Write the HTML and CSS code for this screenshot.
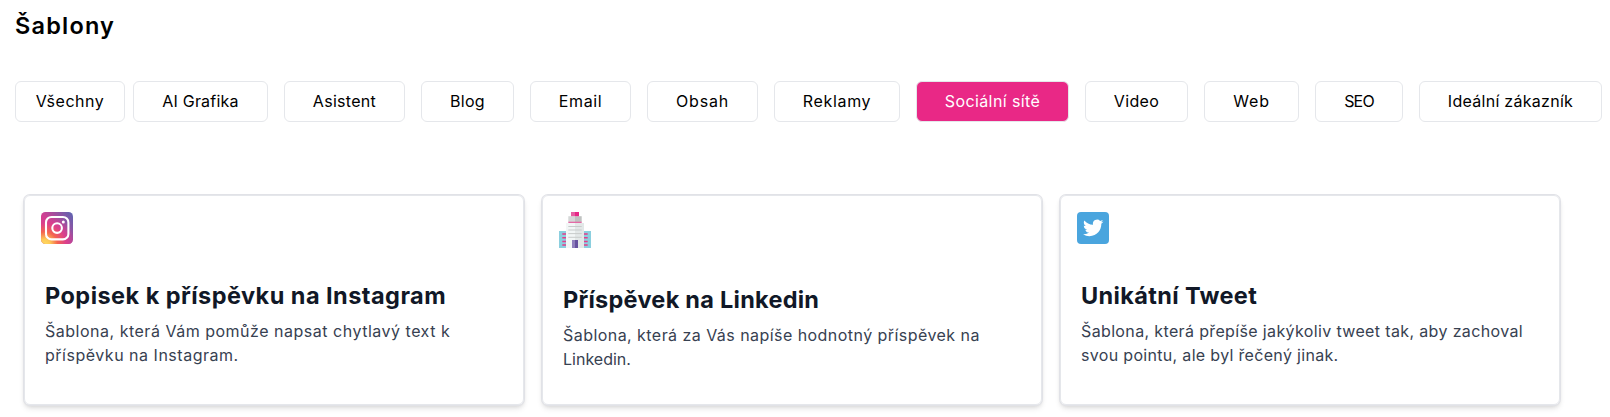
FILE: index.html
```html
<!DOCTYPE html>
<html lang="cs">
<head>
<meta charset="utf-8">
<title>Šablony</title>
<link rel="stylesheet" href="styles.css">
</head>
<body>
<main class="page">
  <h1 class="page-title">Šablony</h1>
  <nav class="tabs">
    <button class="tab tab-all">Všechny</button>
    <button class="tab tab-graphics">AI Grafika</button>
    <button class="tab tab-assistant">Asistent</button>
    <button class="tab tab-blog">Blog</button>
    <button class="tab tab-email">Email</button>
    <button class="tab tab-content">Obsah</button>
    <button class="tab tab-ads">Reklamy</button>
    <button class="tab tab-social active">Sociální sítě</button>
    <button class="tab tab-video">Video</button>
    <button class="tab tab-web">Web</button>
    <button class="tab tab-seo">SEO</button>
    <button class="tab tab-customer">Ideální zákazník</button>
  </nav>
  <section class="cards">
    <article class="card">
      <svg class="icon" width="32" height="32" viewBox="0 0 32 32">
        <defs>
          <radialGradient id="warm" cx="0.12" cy="1.02" r="0.95">
            <stop offset="0" stop-color="#ffdc60"/>
            <stop offset="0.18" stop-color="#fdc957"/>
            <stop offset="0.42" stop-color="#f4644f"/>
            <stop offset="0.7" stop-color="#dc3f8b"/>
            <stop offset="1" stop-color="#d03e94" stop-opacity="0"/>
          </radialGradient>
          <linearGradient id="cool" x1="0.3" y1="0.45" x2="0.95" y2="0">
            <stop offset="0" stop-color="#d23f92"/>
            <stop offset="1" stop-color="#5f63b0"/>
          </linearGradient>
        </defs>
        <rect width="32" height="32" rx="4.5" fill="url(#cool)"/>
        <rect width="32" height="32" rx="4.5" fill="url(#warm)"/>
        <rect x="5" y="5" width="22.4" height="22.4" rx="5.5" fill="none" stroke="#fff" stroke-width="2.1"/>
        <circle cx="16.1" cy="16.1" r="4.8" fill="none" stroke="#fff" stroke-width="2.1"/>
        <circle cx="22.3" cy="9.9" r="1.5" fill="#fff"/>
      </svg>
      <h2 class="card-title title-instagram">Popisek k příspěvku na Instagram</h2>
      <p class="card-text"><span class="line ig-1">Šablona, která Vám pomůže napsat chytlavý text k</span> <span class="line ig-2">příspěvku na Instagram.</span></p>
    </article>
    <article class="card">
      <svg class="icon" width="32" height="36" viewBox="0 0 32 36">
        <path fill="#8bcfdf" d="M0 19h7v17H0zM25 19h7v17h-7z"/>
        <path stroke="#e53c8b" stroke-width="1.5" d="M3.300 22H7M3.300 25.700H7M3.300 29.400H7M3.300 33.100H7M25 22h3.700M25 25.700h3.700M25 29.400h3.700M25 33.100h3.700"/>
        <path fill="#f2f6f6" d="M7 11h9v25H7z"/>
        <path fill="#e3e8e8" d="M16 11h9v25h-9z"/>
        <path fill="#d5d7d7" d="M9.300 4.200H16V10H9.300z"/>
        <path fill="#bfc2c1" d="M16 4.200h6.700V10H16z"/>
        <path fill="#e46aa5" d="M9.300 9.700h13.400V11H9.300z"/>
        <path fill="#e75fa2" d="M12 0h4v4.200h-4z"/>
        <path fill="#e72887" d="M16 0h4v4.200h-4z"/>
        <path stroke="#c8cccb" stroke-width="1" d="M9.300 14.500h13.400M9.300 18h13.400M9.300 21.600h13.400M9.300 25.300h13.400"/>
        <path fill="#8f7fbc" d="M13 28h3v8h-3z"/>
        <path fill="#66529f" d="M16 28h3v8h-3z"/>
      </svg>
      <h2 class="card-title title-linkedin">Příspěvek na Linkedin</h2>
      <p class="card-text"><span class="line li-1">Šablona, která za Vás napíše hodnotný příspěvek na</span> <span class="line li-2">Linkedin.</span></p>
    </article>
    <article class="card">
      <svg class="icon" width="32" height="32" viewBox="0 0 32 32">
        <rect width="32" height="32" rx="4" fill="#4aa5de"/>
        <path fill="#fff" transform="translate(6 5.700) scale(.85)" d="M23.953 4.570a10 10 0 0 1-2.825.775 4.958 4.958 0 0 0 2.163-2.723c-.951.555-2.005.959-3.127 1.184a4.920 4.920 0 0 0-8.384 4.482C7.690 8.095 4.067 6.130 1.640 3.162a4.822 4.822 0 0 0-.666 2.475c0 1.710.870 3.213 2.188 4.096a4.904 4.904 0 0 1-2.228-.616v.060a4.923 4.923 0 0 0 3.946 4.827 4.996 4.996 0 0 1-2.212.085 4.936 4.936 0 0 0 4.604 3.417 9.867 9.867 0 0 1-6.102 2.105c-.390 0-.779-.023-1.170-.067a13.995 13.995 0 0 0 7.557 2.209c9.053 0 13.998-7.496 13.998-13.985 0-.210 0-.420-.015-.630A9.935 9.935 0 0 0 24 4.590z"/>
      </svg>
      <h2 class="card-title title-tweet">Unikátní Tweet</h2>
      <p class="card-text"><span class="line tw-1">Šablona, která přepíše jakýkoliv tweet tak, aby zachoval</span> <span class="line tw-2">svou pointu, ale byl řečený jinak.</span></p>
    </article>
  </section>
</main>
</body>
</html>
```
FILE: styles.css
```css
* { box-sizing: border-box; }
body {
  margin: 0;
  background: #fff;
  color: #000;
  font-family: "Inter", sans-serif;
  font-size: 16px;
  line-height: 24px;
}
.page { min-height: 417px; padding: 10px 0 0 15px; }
.page-title {
  margin: 0 0 39px;
  font-size: 23.5px;
  line-height: 32px;
  font-weight: 600;
  letter-spacing: 1.2px;
}
.tabs { display: flex; gap: 16px; }
.tab {
  flex: none;
  height: 41px;
  padding: 0 0 2px;
  border: 1px solid #e5e7eb;
  border-radius: 6px;
  background: #fff;
  color: #000;
  font: inherit;
  white-space: nowrap;
}
.tab.active { background: #e92886; color: #fff; }
.tab-all { width: 110px; margin-right: -8px; letter-spacing: .51px; }
.tab-graphics { width: 135px; letter-spacing: .2px; }
.tab-assistant { width: 121px; letter-spacing: .3px; }
.tab-blog { width: 93px; letter-spacing: .3px; }
.tab-email { width: 101px; letter-spacing: .6px; }
.tab-content { width: 111px; letter-spacing: .85px; }
.tab-ads { width: 126px; letter-spacing: .68px; }
.tab-social { width: 153px; letter-spacing: .39px; }
.tab-video { width: 103px; letter-spacing: .35px; }
.tab-web { width: 95px; letter-spacing: .8px; }
.tab-seo { width: 88px; letter-spacing: -.8px; }
.tab-customer { width: 183px; letter-spacing: .28px; }

.cards {
  display: grid;
  grid-template-columns: repeat(3, 500px);
  gap: 18px;
  margin: 73px 0 0 9px;
}
.card {
  height: 210px;
  padding: 16px;
  border: 1px solid #e5e7eb;
  border-radius: 6px;
  box-shadow: 0 0 0 1px #e1e2e7, 0 4px 6px -1px rgba(0, 0, 0, .12), 0 2px 4px -1px rgba(0, 0, 0, .1);
}
.icon { display: block; }
.card-title {
  margin: 36px 0 0 4px;
  font-size: 23.5px;
  line-height: 32px;
  font-weight: 700;
  color: #111827;
  white-space: nowrap;
}
.card-text { margin: 7px 0 0 4px; color: #374151; }
.line { display: block; white-space: nowrap; }
.title-instagram { letter-spacing: .46px; }
.title-linkedin { letter-spacing: .26px; }
.title-tweet { letter-spacing: .36px; }
.ig-1 { letter-spacing: .51px; }
.ig-2 { letter-spacing: .51px; }
.li-1 { letter-spacing: .45px; }
.li-2 { letter-spacing: 0; }
.tw-1 { letter-spacing: .36px; }
.tw-2 { letter-spacing: .32px; }
```
